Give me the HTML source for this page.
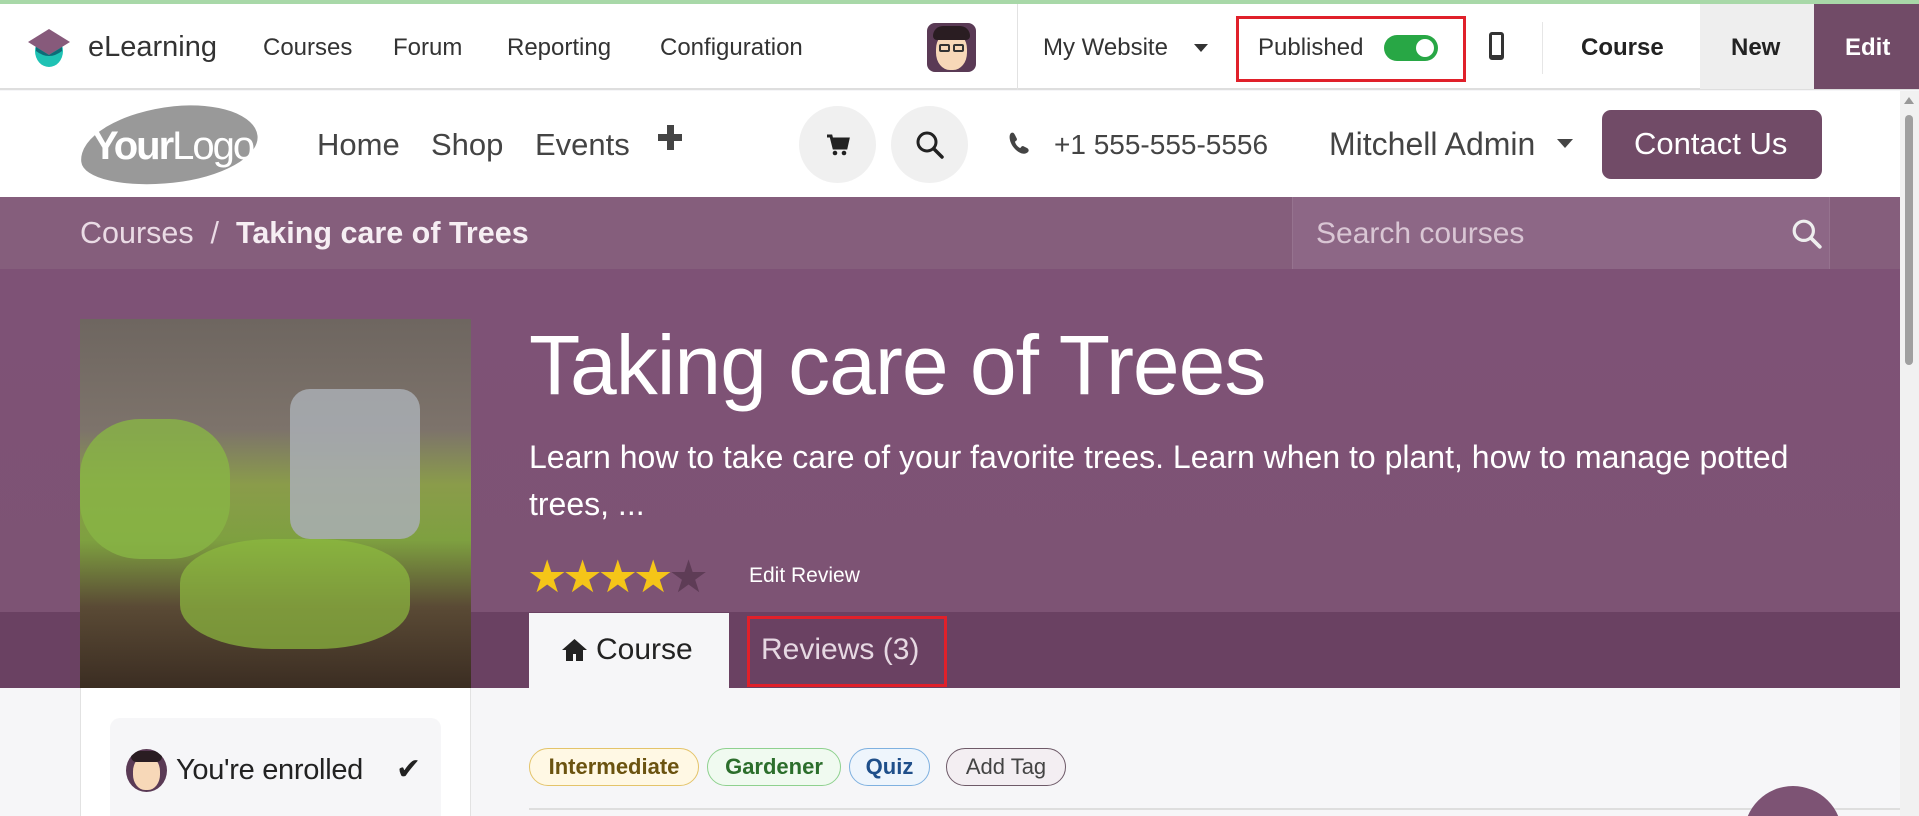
<!DOCTYPE html>
<html style="overflow:hidden;width:1919px;height:816px"><head><meta charset="utf-8"><style>
*{margin:0;padding:0;box-sizing:border-box}
body{width:1919px;height:816px;overflow:hidden;position:relative;background:#f6f6f8;font-family:"Liberation Sans",sans-serif}
.a{position:absolute;white-space:nowrap}
</style></head><body>
<div class="a" style="left:0;top:0;width:1919px;height:4px;background:#a8d8a8"></div>
<!-- top bar -->
<div class="a" style="left:0;top:4px;width:1919px;height:86px;background:#fff;border-bottom:2px solid #dedede"></div>
<svg class="a" style="left:26px;top:25px" width="46" height="46" viewBox="0 0 46 46"><ellipse cx="23" cy="26" rx="14" ry="16" fill="#1fc2b4"/><path d="M23 4 L44 17 L23 30 L2 17Z" fill="#875a7b"/><path d="M10 22 L23 30 L36 22 L36 26 Q23 36 10 26Z" fill="#0e6b77"/></svg>
<div class="a" style="left:88px;top:31px;font-size:29px;color:#333">eLearning</div>
<div class="a" style="left:263px;top:34px;font-size:24px;color:#333">Courses</div>
<div class="a" style="left:393px;top:34px;font-size:24px;color:#333">Forum</div>
<div class="a" style="left:507px;top:34px;font-size:24px;color:#333">Reporting</div>
<div class="a" style="left:660px;top:34px;font-size:24px;color:#333">Configuration</div>
<div class="a" style="left:927px;top:23px;width:49px;height:49px;border-radius:8px;background:#5a3a55;overflow:hidden"><div style="position:absolute;left:9px;top:9px;width:31px;height:38px;border-radius:45%;background:#f7d8b8"></div><div style="position:absolute;left:6px;top:3px;width:37px;height:14px;border-radius:10px 10px 4px 4px;background:#2a1d22"></div><div style="position:absolute;left:12px;top:21px;width:11px;height:8px;border:2px solid #333;border-radius:2px"></div><div style="position:absolute;left:26px;top:21px;width:11px;height:8px;border:2px solid #333;border-radius:2px"></div></div>
<div class="a" style="left:1017px;top:4px;width:1px;height:86px;background:#e2e2e2"></div>
<div class="a" style="left:1043px;top:34px;font-size:24px;color:#333">My Website</div>
<div class="a" style="left:1194px;top:44px;border-left:7px solid transparent;border-right:7px solid transparent;border-top:8px solid #333"></div>
<div class="a" style="left:1236px;top:16px;width:230px;height:66px;border:3px solid #e0202a"></div>
<div class="a" style="left:1258px;top:34px;font-size:24px;color:#333">Published</div>
<div class="a" style="left:1384px;top:35px;width:54px;height:26px;border-radius:13px;background:#28a745"><div style="position:absolute;right:4px;top:4px;width:18px;height:18px;border-radius:50%;background:#fff"></div></div>
<div class="a" style="left:1489px;top:32px;width:15px;height:28px;border:3px solid #333;border-radius:3px;border-bottom-width:5px"></div>
<div class="a" style="left:1542px;top:22px;width:1px;height:52px;background:#e6e6e6"></div>
<div class="a" style="left:1581px;top:34px;font-size:24px;font-weight:bold;color:#222">Course</div>
<div class="a" style="left:1700px;top:4px;width:114px;height:85px;background:#eeeeee"></div>
<div class="a" style="left:1731px;top:34px;font-size:24px;font-weight:bold;color:#222">New</div>
<div class="a" style="left:1814px;top:4px;width:105px;height:85px;background:#714b67"></div>
<div class="a" style="left:1845px;top:34px;font-size:24px;font-weight:bold;color:#fff">Edit</div>
<!-- site header -->
<div class="a" style="left:0;top:91px;width:1900px;height:106px;background:#fff"></div>
<div class="a" style="left:1900px;top:91px;width:19px;height:725px;background:#f1f1f1"><div style="position:absolute;left:5px;top:24px;width:8px;height:250px;border-radius:4px;background:#a0a0a0"></div><div style="position:absolute;left:4px;top:6px;border-left:5px solid transparent;border-right:5px solid transparent;border-bottom:7px solid #999"></div></div>
<div class="a" style="left:80px;top:107px;width:178px;height:76px;border-radius:55% 45% 50% 50%/60% 50% 50% 40%;background:#999;transform:rotate(-6deg)"></div>
<div class="a" style="left:92px;top:124px;font-size:40px;color:#fff;letter-spacing:-2px"><b>Your</b>Logo</div>
<div class="a" style="left:317px;top:127px;font-size:31px;color:#444">Home</div>
<div class="a" style="left:431px;top:127px;font-size:31px;color:#444">Shop</div>
<div class="a" style="left:535px;top:127px;font-size:31px;color:#444">Events</div>
<div class="a" style="left:658px;top:134px;width:24px;height:7px;background:#444"></div>
<div class="a" style="left:667px;top:125px;width:7px;height:25px;background:#444"></div>
<div class="a" style="left:799px;top:106px;width:77px;height:77px;border-radius:50%;background:#f0f0f0"></div>
<svg class="a" style="left:826px;top:133px" width="24" height="24" viewBox="0 0 24 24"><path d="M1 3h4l3 12h12l2-9H7" fill="none" stroke="#222" stroke-width="3"/><path d="M7 6h15l-2 9H8z" fill="#222"/><circle cx="9" cy="20" r="2.3" fill="#222"/><circle cx="18" cy="20" r="2.3" fill="#222"/></svg>
<div class="a" style="left:891px;top:106px;width:77px;height:77px;border-radius:50%;background:#f0f0f0"></div>
<svg class="a" style="left:915px;top:130px" width="30" height="30" viewBox="0 0 30 30"><circle cx="12" cy="12" r="9" fill="none" stroke="#222" stroke-width="3"/><path d="M19 19l8 8" stroke="#222" stroke-width="3.5" stroke-linecap="round"/></svg>
<svg class="a" style="left:1006px;top:131px" width="24" height="24" viewBox="0 0 24 24"><path d="M5 2c2-1 3 0 4 2l2 4c0 2-2 2-2 3 1 3 3 5 5 6 1 0 1-2 3-2l4 2c2 1 2 3 1 4-3 3-8 2-13-3S2 5 5 2z" fill="#444"/></svg>
<div class="a" style="left:1054px;top:129px;font-size:28px;color:#444">+1 555-555-5556</div>
<div class="a" style="left:1329px;top:126px;font-size:32px;color:#444">Mitchell Admin</div>
<div class="a" style="left:1557px;top:139px;border-left:8px solid transparent;border-right:8px solid transparent;border-top:9px solid #444"></div>
<div class="a" style="left:1602px;top:110px;width:220px;height:69px;border-radius:9px;background:#714b67"></div>
<div class="a" style="left:1634px;top:126px;font-size:31px;color:#fff">Contact Us</div>
<!-- breadcrumb -->
<div class="a" style="left:0;top:197px;width:1900px;height:72px;background:#855e7c"></div>
<div class="a" style="left:80px;top:216px;font-size:30.5px;color:#eadbe5">Courses &nbsp;/&nbsp; <b style="color:#f6eef3">Taking care of Trees</b></div>
<div class="a" style="left:1292px;top:197px;width:538px;height:72px;background:#8d6786;border-left:1px solid #96738f;border-right:1px solid #96738f"></div>
<div class="a" style="left:1316px;top:217px;font-size:30px;color:#d9c6d4">Search courses</div>
<svg class="a" style="left:1791px;top:218px" width="32" height="32" viewBox="0 0 30 30"><circle cx="12" cy="12" r="9" fill="none" stroke="#eee" stroke-width="3"/><path d="M19 19l8 8" stroke="#eee" stroke-width="3.5" stroke-linecap="round"/></svg>
<!-- hero -->
<div class="a" style="left:0;top:269px;width:1900px;height:343px;background:linear-gradient(180deg,#7e5276,#7d5374)"></div>
<div class="a" style="left:0;top:612px;width:1900px;height:76px;background:#6a4162"></div>
<div class="a" style="left:80px;top:319px;width:391px;height:369px;overflow:hidden;background:linear-gradient(180deg,#6e6660 0%,#7d736b 30%,#8a9c4a 45%,#7ea040 60%,#5a4a35 78%,#3b2d22 100%)">
<div style="position:absolute;left:0;top:100px;width:150px;height:140px;border-radius:40%;background:#88b545;opacity:.8"></div>
<div style="position:absolute;left:210px;top:70px;width:130px;height:150px;border-radius:20px;background:#a9aeb4;opacity:.85"></div>
<div style="position:absolute;left:100px;top:220px;width:230px;height:110px;border-radius:40%;background:#8dbb3e;opacity:.7"></div>
</div>
<div class="a" style="left:529px;top:317px;font-size:84px;color:#fff;letter-spacing:-1px">Taking care of Trees</div>
<div class="a" style="left:529px;top:434px;font-size:32px;line-height:47px;color:#fff;white-space:normal;width:1290px">Learn how to take care of your favorite trees. Learn when to plant, how to manage potted trees, ...</div>
<div class="a" style="left:527px;top:550px;font-size:45px;letter-spacing:-5px;color:#f5c518">★★★★<span style="color:#5e3c56">★</span></div>
<div class="a" style="left:749px;top:564px;font-size:21px;color:#fff">Edit Review</div>
<div class="a" style="left:529px;top:613px;width:200px;height:75px;background:#f6f6f8"></div>
<svg class="a" style="left:561px;top:638px" width="27" height="24" viewBox="0 0 27 24"><path d="M13.5 1L1 12h4v11h7v-7h3v7h7V12h4z" fill="#222"/></svg>
<div class="a" style="left:596px;top:633px;font-size:30px;color:#222">Course</div>
<div class="a" style="left:747px;top:616px;width:200px;height:71px;border:3px solid #e0202a"></div>
<div class="a" style="left:761px;top:633px;font-size:30px;color:#e6d8e2">Reviews (3)</div>
<!-- below -->
<div class="a" style="left:80px;top:688px;width:391px;height:128px;background:#fff;border-left:1px solid #e2e2e2;border-right:1px solid #e2e2e2"></div>
<div class="a" style="left:110px;top:718px;width:331px;height:98px;border-radius:10px 10px 0 0;background:#f6f6f8"></div>
<div class="a" style="left:126px;top:749px;width:41px;height:43px;border-radius:50%;background:#5a3a55;overflow:hidden"><div style="position:absolute;left:7px;top:7px;width:27px;height:34px;border-radius:45%;background:#f7d8b8"></div><div style="position:absolute;left:5px;top:2px;width:31px;height:11px;border-radius:8px;background:#2a1d22"></div></div>
<div class="a" style="left:176px;top:754px;font-size:29px;color:#222;letter-spacing:-0.3px">You're enrolled</div>
<div class="a" style="left:396px;top:752px;font-size:30px;color:#222">✔</div>
<div class="a" style="left:529px;top:748px;width:170px;height:38px;border-radius:19px;border:1px solid #e4c46a;background:#fff8e4;color:#6b5310;font-size:22px;font-weight:bold;text-align:center;line-height:36px">Intermediate</div>
<div class="a" style="left:707px;top:748px;width:134px;height:38px;border-radius:19px;border:1px solid #8fd18f;background:#f0faf0;color:#2c6e2c;font-size:22px;font-weight:bold;text-align:center;line-height:36px">Gardener</div>
<div class="a" style="left:849px;top:748px;width:81px;height:38px;border-radius:19px;border:1px solid #7fb1e0;background:#eef5fc;color:#1f4f8a;font-size:22px;font-weight:bold;text-align:center;line-height:36px">Quiz</div>
<div class="a" style="left:946px;top:748px;width:120px;height:38px;border-radius:19px;border:1px solid #6e5a68;background:#f3eef2;color:#444;font-size:22px;text-align:center;line-height:36px">Add Tag</div>
<div class="a" style="left:529px;top:808px;width:1371px;height:2px;background:#dedede"></div>
<div class="a" style="left:1744px;top:786px;width:98px;height:30px;overflow:hidden"><div style="width:98px;height:98px;border-radius:50%;background:#7d5374"></div></div>
</body></html>
